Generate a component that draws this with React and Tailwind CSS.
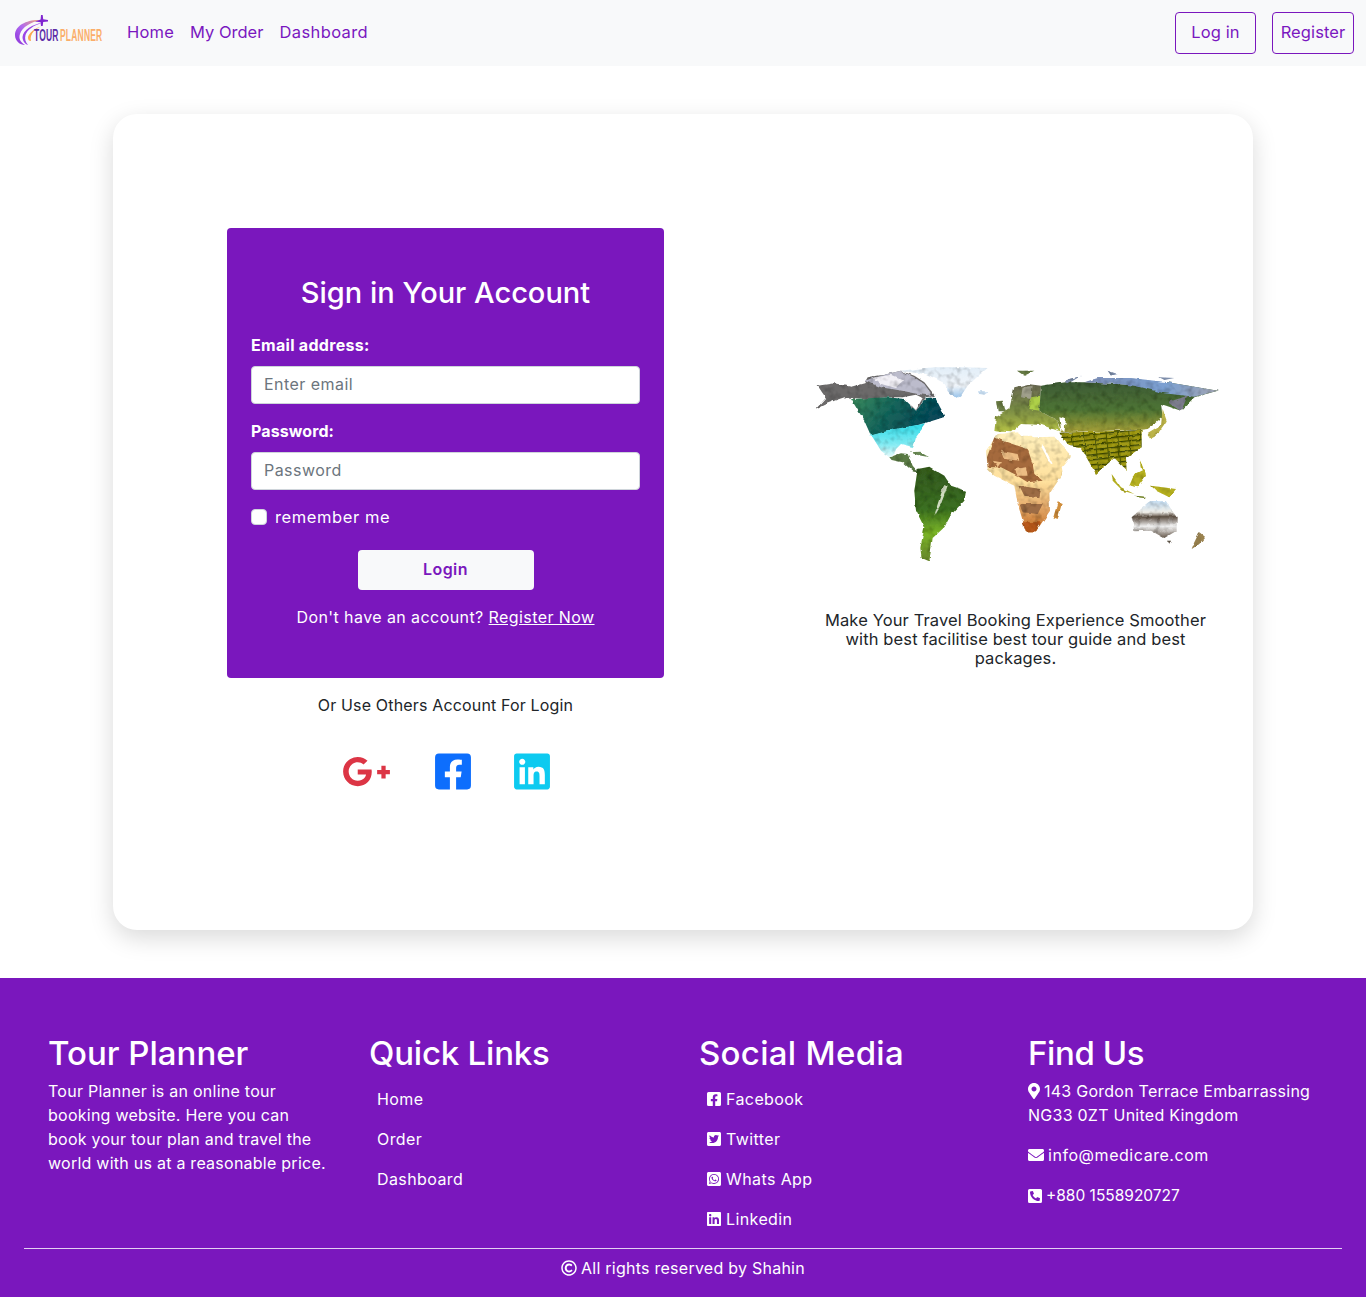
import React from "react";
import { FaGooglePlusG, FaFacebookSquare, FaLinkedin, FaTwitterSquare, FaWhatsappSquare, FaMapMarkerAlt, FaEnvelope, FaPhoneSquareAlt, FaRegCopyright } from "react-icons/fa";

function Logo() {
  return (
    <svg width="90" height="36" viewBox="0 0 90 36" className="block shrink-0">
      <defs>
        <linearGradient id="sw" x1="1" y1="0" x2="0" y2="1">
          <stop offset="0" stopColor="#f3a870" />
          <stop offset="0.5" stopColor="#b06af0" />
          <stop offset="1" stopColor="#8a30d8" />
        </linearGradient>
        <filter id="lb"><feGaussianBlur stdDeviation="0.3" /></filter>
      </defs>
      <g filter="url(#lb)">
        <path d="M27 5 C14 4 1 10 1 20 C1 26 6 30 11 30 C6 27 4.5 23 6 19 C8 12 17 7 27 5Z" fill="url(#sw)" />
        <path d="M28 8 C19 9 9 15 8.5 22 C8.5 26 11 29 14 30 C11.5 27 10.5 24 11.5 20 C13 15 20 10 28 8Z" fill="#9a45e6" />
        <path d="M28 11 C21 13 15 18 14 22 C14 25 15 26 17 26 C16 23 17 19 20 16 C22 14 25 12 28 11Z" fill="#fba94f" />
        <path d="M27 0 L28.7 0 L29.2 4.3 L34 5 L34 6.4 L29.2 7 L28.7 11 L27 11 L26.6 7.3 L21 6.4 L26.6 4.4Z" fill="#8128d0" />
      </g>
      <g transform="scale(0.53 1)" fontFamily="'Liberation Sans', sans-serif" fontWeight="700" fontSize="16">
        <text x="37.7" y="26" fill="#5d2ea8">TOUR</text>
        <text x="86.8" y="26" fill="#fbae6a">PLANNER</text>
      </g>
    </svg>
  );
}

function WorldMap() {
  return (
    <svg width="430" height="220" viewBox="0 0 1290 660" className="block">
      <defs>
        <filter id="soft" x="-5%" y="-5%" width="110%" height="110%">
          <feTurbulence type="fractalNoise" baseFrequency="0.05" numOctaves="2" seed="4" result="n" />
          <feDisplacementMap in="SourceGraphic" in2="n" scale="10" xChannelSelector="R" yChannelSelector="G" result="d" />
          <feColorMatrix in="n" type="matrix" values="0 0 0 0 0  0 0 0 0 0  0 0 0 0 0  1 0 0 0 -0.45" result="shade" />
          <feComposite in="shade" in2="d" operator="in" result="s" />
          <feMerge result="m"><feMergeNode in="d" /><feMergeNode in="s" /></feMerge>
          <feGaussianBlur in="m" stdDeviation="1.5" />
        </filter>
        <filter id="cut" x="-5%" y="-5%" width="110%" height="110%">
          <feTurbulence type="fractalNoise" baseFrequency="0.08" numOctaves="2" seed="7" result="n" />
          <feDisplacementMap in="SourceGraphic" in2="n" scale="10" />
          <feGaussianBlur stdDeviation="1" />
        </filter>
        <linearGradient id="can" x1="0" y1="0" x2="1" y2="0.3">
          <stop offset="0" stopColor="#3a8a5c" /><stop offset="0.5" stopColor="#16625a" /><stop offset="1" stopColor="#0d4658" />
        </linearGradient>
        <linearGradient id="usa" x1="0" y1="0" x2="0" y2="1">
          <stop offset="0" stopColor="#2ddbe8" /><stop offset="0.6" stopColor="#7eeaf2" /><stop offset="1" stopColor="#e8fbfc" />
        </linearGradient>
        <linearGradient id="sa" x1="0" y1="0" x2="0" y2="1">
          <stop offset="0" stopColor="#34591f" /><stop offset="0.45" stopColor="#3b6f22" /><stop offset="0.7" stopColor="#7ab428" /><stop offset="1" stopColor="#66842a" />
        </linearGradient>
        <linearGradient id="af" x1="0" y1="0" x2="0" y2="1">
          <stop offset="0" stopColor="#fff0bc" /><stop offset="0.5" stopColor="#ffe09c" /><stop offset="0.75" stopColor="#e6ac6c" /><stop offset="1" stopColor="#c06820" />
        </linearGradient>
        <linearGradient id="as" x1="0" y1="0" x2="0" y2="1">
          <stop offset="0" stopColor="#3d5a34" /><stop offset="0.55" stopColor="#4e7434" /><stop offset="1" stopColor="#a6a038" />
        </linearGradient>
        <linearGradient id="sky" x1="0" y1="0" x2="1" y2="0">
          <stop offset="0" stopColor="#7f8fb6" /><stop offset="0.6" stopColor="#7ba0d2" /><stop offset="1" stopColor="#a0a4b2" />
        </linearGradient>
        <linearGradient id="gr" x1="0" y1="0" x2="0" y2="1">
          <stop offset="0" stopColor="#e2eef8" /><stop offset="0.6" stopColor="#f0f5fa" /><stop offset="1" stopColor="#94c0e8" />
        </linearGradient>
        <linearGradient id="eu" x1="0" y1="0" x2="0" y2="1">
          <stop offset="0" stopColor="#6b6a54" /><stop offset="0.5" stopColor="#768844" /><stop offset="1" stopColor="#b4c044" />
        </linearGradient>
        <linearGradient id="aus" x1="0" y1="0" x2="0" y2="1">
          <stop offset="0" stopColor="#c2dcf2" /><stop offset="0.3" stopColor="#f0eee8" /><stop offset="0.42" stopColor="#5c4e42" /><stop offset="0.68" stopColor="#f0f0f0" /><stop offset="1" stopColor="#6c5e50" />
        </linearGradient>
        <pattern id="rice" width="34" height="15" patternUnits="userSpaceOnUse" patternTransform="rotate(-6)">
          <rect width="34" height="15" fill="#a09a14" />
          <rect width="34" height="4" fill="#3a460e" />
          <rect width="3" height="15" fill="#4c560e" />
        </pattern>
      </defs>
      <g filter="url(#soft)">
        <path d="M300 50 L350 44 L400 40 L480 40 L560 42 L525 72 L500 95 L480 125 L462 133 L440 112 L425 85 L375 60 L330 55Z" fill="url(#gr)" />
        <path d="M530 112 L565 112 L550 122 L535 120Z" fill="#c6dcf0" />
        <path d="M45 165 L75 132 L50 95 L100 88 L150 98 L190 88 L200 70 L250 62 L300 50 L340 65 L370 85 L402 125 L375 130 L345 170 L310 130 L260 130 L200 135 L130 130 L100 140 L70 152Z" fill="#6c6a6a" />
        <path d="M190 80 L250 62 L300 50 L340 70 L370 90 L395 125 L350 120 L300 110 L240 100Z" fill="#bcbccc" />
        <path d="M215 72 L270 62 L310 80 L285 102 L240 90Z" fill="#f2f0f6" />
        <path d="M150 135 L260 130 L310 135 L345 170 L375 132 L402 130 L432 188 L395 200 L372 207 L340 215 L275 228 L210 245 L190 200Z" fill="url(#can)" />
        <path d="M205 245 L280 226 L375 208 L345 250 L337 280 L300 270 L285 285 L280 300 L265 310 L240 290 L215 250Z" fill="url(#usa)" />
        <path d="M265 310 L300 298 L320 300 L335 335 L352 355 L335 352 L305 325 L272 318Z" fill="#5a7a44" />
        <path d="M325 295 L355 293 L385 310 L350 303Z" fill="#6a8a54" />
        <path d="M350 345 L385 338 L430 365 L450 395 L495 410 L490 440 L450 482 L430 520 L395 552 L385 622 L362 612 L358 582 L370 520 L345 470 L340 410Z" fill="url(#sa)" />
        <path d="M430 390 L410 450 L400 485 L420 450 L440 395Z" fill="#d0dcc0" />
        <path d="M648 50 L700 50 L670 65Z" fill="#667a44" />
        <path d="M585 142 L605 140 L615 175 L590 175Z" fill="#6a7c44" />
        <path d="M580 232 L585 190 L625 165 L640 100 L680 90 L720 95 L715 170 L770 200 L775 232 L720 212 L660 210 L630 235Z" fill="url(#eu)" />
        <path d="M665 100 L695 95 L690 135 L660 130Z" fill="#a0a08c" />
        <path d="M690 130 L718 125 L715 170 L685 165Z" fill="#aed048" />
        <path d="M720 95 L790 85 L850 85 L950 90 L1030 95 L1100 85 L1250 110 L1180 130 L1140 170 L1080 150 L1085 190 L1040 225 L1020 227 L780 235 L770 200 L715 170Z" fill="url(#as)" />
        <path d="M850 85 L890 72 L990 72 L1100 85 L1250 110 L1180 128 L1090 118 L1000 95 L950 90Z" fill="url(#sky)" />
        <path d="M790 80 L840 65 L800 90Z M920 50 L950 60 L930 65Z M1075 70 L1120 72 L1090 78Z" fill="#7f8fac" />
        <path d="M1100 145 L1160 125 L1140 172Z" fill="#7c7c8c" />
        <path d="M1085 165 L1097 200 L1070 240 L1048 252 L1040 240 L1080 215Z" fill="#bcb448" />
        <path d="M775 236 L1022 228 L1022 280 L975 312 L977 348 L940 312 L885 360 L840 282 L800 275Z" fill="url(#rice)" />
        <path d="M555 290 L590 240 L650 235 L700 250 L760 248 L810 305 L782 340 L785 360 L745 420 L747 470 L705 532 L675 532 L650 450 L640 395 L580 365 L560 345Z" fill="url(#af)" />
        <path d="M558 310 L580 250 L610 262 L680 285 L695 330 L700 360 L725 380 L680 385 L640 360 L600 340 L560 340Z" fill="#a56a3e" />
        <path d="M600 290 L650 300 L655 320 L610 315Z M640 345 L675 340 L680 365 L650 365Z M575 320 L600 325 L590 340Z" fill="#edbd84" />
        <path d="M655 395 L720 405 L715 430 L670 425Z M655 450 L725 450 L710 480 L665 475Z" fill="#9c6c44" />
        <path d="M665 505 L720 505 L705 532 L675 532Z" fill="#b8581c" />
        <path d="M770 445 L782 450 L770 495 L757 490Z" fill="#d08e3c" />
        <path d="M932 360 L960 400 L1000 420 L965 410 L935 380Z M1000 360 L1030 345 L1035 365 L1010 400 L985 395Z M1050 395 L1125 405 L1105 430 L1065 410Z M1015 315 L1035 360 L1020 345Z" fill="#b6b024" />
        <path d="M1000 425 L1035 428 L1030 432 L1005 430Z" fill="#6a7c1c" />
        <path d="M992 490 L1020 465 L1050 442 L1095 442 L1127 490 L1127 530 L1090 552 L1050 530 L1000 532Z" fill="url(#aus)" />
        <path d="M1098 560 L1110 560 L1105 572Z" fill="#5a5044" />
        <path d="M1195 535 L1212 548 L1195 570 L1172 585 L1180 565Z" fill="#9a8250" />
      </g>
      <g filter="url(#cut)" fill="#fff">
        <path d="M305 130 L345 122 L365 132 L345 168Z" />
        <path d="M725 270 L755 330 L745 325 L722 280Z" />
        <path d="M650 235 L700 232 L705 245 L660 245Z" />
        <path d="M775 190 L795 195 L790 235 L780 225Z" />
      </g>
    </svg>
  );
}

function FooterLink({ icon, children }) {
  return <div className="h-10 flex items-center gap-[5px] pl-2">{icon}<span>{children}</span></div>;
}

export default function App() {
  return (
    <div className="text-[16px] tracking-[0.4px]" style={{ fontFamily: "Inter, sans-serif" }}>
      <nav className="h-[66px] bg-[#f8f9fa] flex items-center pl-[14px] pr-3">
        <Logo />
        <div className="flex ml-[23px] -mt-[2px] text-[#7a17c0] text-[16.5px] tracking-[0.2px]">
          <a>Home</a>
          <a className="ml-[16px] tracking-normal">My Order</a>
          <a className="ml-[16px] tracking-[0.4px]">Dashboard</a>
        </div>
        <div className="ml-auto flex gap-4 text-[#7a17c0] text-[16.5px] tracking-[0.1px]">
          <button className="w-[81px] h-[42px] border border-[#7a17bd] rounded pb-[2px]">Log in</button>
          <button className="w-[82px] h-[42px] border border-[#7a17bd] rounded pb-[2px]">Register</button>
        </div>
      </nav>

      <main className="pt-12 pb-12 px-[113px]">
        <div className="h-[816px] rounded-3xl bg-white shadow-[0_8px_24px_rgba(0,0,0,0.15)] grid grid-cols-[570px_1fr] py-[114px]">
          <div className="pl-[114px] pr-[19px]">
            <div className="bg-[#7a17bd] rounded-sm h-[450px] p-6 text-white">
              <h1 className="text-center text-[29px] font-medium leading-[40px] mt-[21px] tracking-normal">Sign in Your Account</h1>
              <label className="block font-bold mt-[20px] leading-6 tracking-[0.3px]">Email address:</label>
              <input placeholder="Enter email" className="block mt-[9px] pb-[3px] w-full h-[38px] bg-white rounded px-3 border border-[#ced4da] text-[#212529] tracking-[0.45px] placeholder:text-[#6c757d]" />
              <label className="block font-bold mt-[15px] leading-6 tracking-[0.1px]">Password:</label>
              <input placeholder="Password" className="block mt-[9px] pb-[3px] w-full h-[38px] bg-white rounded px-3 border border-[#ced4da] text-[#212529] tracking-[0.45px] placeholder:text-[#6c757d]" />
              <div className="flex items-center gap-2 mt-[15px] h-6">
                <span className="w-4 h-4 rounded bg-white border border-[#ced4da]" />
                <span className="text-[16.5px] tracking-[0.6px]">remember me</span>
              </div>
              <div className="flex justify-center mt-[21px]">
                <button className="w-[176px] h-10 rounded bg-[#f8f9fa] text-[#7a17bd] font-semibold pb-[2px]">Login</button>
              </div>
              <p className="text-center mt-[15px] leading-6 tracking-[0.42px]">Don't have an account? <a className="underline">Register Now</a></p>
            </div>
            <p className="text-center mt-[15px] leading-6 text-[#212529] tracking-[0.16px]">Or Use Others Account For Login</p>
            <div className="relative h-9 mt-[36px] flex items-center pl-[115px]">
              <FaGooglePlusG className="w-[49px] h-[39px] text-[#dc3545]" />
              <FaFacebookSquare className="ml-[44px] w-[36px] h-[41px] text-[#0d6efd]" />
              <FaLinkedin className="ml-[43px] w-[36px] h-[41px] text-[#0dcaf0]" />
            </div>
          </div>
          <div className="flex flex-col items-center pl-[95px] pt-[126px]">
            <WorldMap />
            <p className="w-[400px] text-center mt-[37px] text-[16.5px] leading-[19px] text-[#212529] tracking-[0.12px]">Make Your Travel Booking Experience Smoother with best facilitise best tour guide and best packages.</p>
          </div>
        </div>
      </main>

      <footer className="h-[319px] bg-[#7a17bd] text-white px-6">
        <div className="h-[270px] pt-[52px] pl-6 grid grid-cols-[321px_330px_329px_1fr]">
          <div>
            <h2 className="text-[33px] font-medium leading-[46px] tracking-normal">Tour Planner</h2>
            <p className="leading-6 mt-[3px] whitespace-nowrap tracking-[0.25px]">Tour Planner is an online tour<br />booking website. Here you can<br />book your tour plan and travel the<br />world with us at a reasonable price.</p>
          </div>
          <div>
            <h2 className="text-[33px] font-medium leading-[46px] tracking-[-0.2px]">Quick Links</h2>
            <div className="mt-[3px]">
              <div className="h-10 flex items-center pl-2">Home</div>
              <div className="h-10 flex items-center pl-2">Order</div>
              <div className="h-10 flex items-center pl-2">Dashboard</div>
            </div>
          </div>
          <div>
            <h2 className="text-[33px] font-medium leading-[46px] tracking-[0.3px]">Social Media</h2>
            <div className="mt-[3px]">
              <FooterLink icon={<FaFacebookSquare className="w-[14px] h-4" />}>Facebook</FooterLink>
              <FooterLink icon={<FaTwitterSquare className="w-[14px] h-4" />}>Twitter</FooterLink>
              <FooterLink icon={<FaWhatsappSquare className="w-[14px] h-4" />}>Whats App</FooterLink>
              <FooterLink icon={<FaLinkedin className="w-[14px] h-4" />}>Linkedin</FooterLink>
            </div>
          </div>
          <div>
            <h2 className="text-[33px] font-medium leading-[46px] tracking-[-0.4px]">Find Us</h2>
            <p className="leading-6 mt-[3px] w-[300px] tracking-[0.25px]"><FaMapMarkerAlt className="inline w-3 h-4 mr-1 align-[-2px]" />143 Gordon Terrace Embarrassing NG33 0ZT United Kingdom</p>
            <p className="leading-6 mt-4 flex items-center gap-1 tracking-[0.55px]"><FaEnvelope className="w-4 h-4" />info@medicare.com</p>
            <p className="leading-6 mt-4 flex items-center gap-1 tracking-normal"><FaPhoneSquareAlt className="w-[14px] h-4" /><span className="text-[15.5px] leading-6 mt-[1px]">+880 1558920727</span></p>
          </div>
        </div>
        <div className="border-t border-white/80 pt-[7px] flex justify-center items-center gap-1 leading-6 tracking-[0.25px]">
          <FaRegCopyright className="w-4 h-4" /><span>All rights reserved by Shahin</span>
        </div>
      </footer>
    </div>
  );
}
